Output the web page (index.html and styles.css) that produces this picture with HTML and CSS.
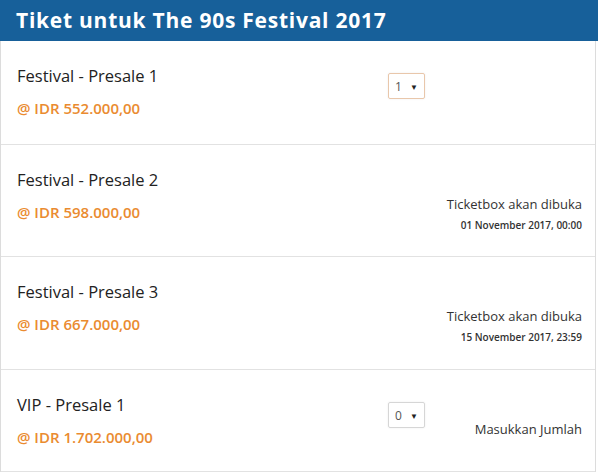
FILE: index.html
```html
<!DOCTYPE html>
<html>
<head>
<meta charset="utf-8">
<link rel="stylesheet" href="styles.css">
</head>
<body>
<div class="panel">
  <div class="header">Tiket untuk The 90s Festival 2017</div>
  <div class="row first">
    <div class="info">
      <div class="name">Festival - Presale 1</div>
      <div class="price">@ IDR 552.000,00</div>
    </div>
    <div class="qty"><div class="select focus"><span>1</span><span class="arrow">▼</span></div></div>
    <div class="side"></div>
  </div>
  <div class="row timed">
    <div class="info">
      <div class="name">Festival - Presale 2</div>
      <div class="price">@ IDR 598.000,00</div>
    </div>
    <div class="qty"></div>
    <div class="side status">
      <div class="open">Ticketbox akan dibuka</div>
      <div class="date">01 November 2017, 00:00</div>
    </div>
  </div>
  <div class="row timed third">
    <div class="info">
      <div class="name">Festival - Presale 3</div>
      <div class="price">@ IDR 667.000,00</div>
    </div>
    <div class="qty"></div>
    <div class="side status">
      <div class="open">Ticketbox akan dibuka</div>
      <div class="date">15 November 2017, 23:59</div>
    </div>
  </div>
  <div class="row last">
    <div class="info">
      <div class="name">VIP - Presale 1</div>
      <div class="price">@ IDR 1.702.000,00</div>
    </div>
    <div class="qty"><div class="select"><span>0</span><span class="arrow">▼</span></div></div>
    <div class="side hint">Masukkan Jumlah</div>
  </div>
</div>
</body>
</html>
```
FILE: styles.css
```css
html, body {
  margin: 0;
  padding: 0;
  background: #ffffff;
}
body {
  font-family: "Open Sans", "Noto Sans", sans-serif;
  color: #222222;
}
.panel {
  width: 594px;
  border-left: 1px solid #dcdcdc;
  border-right: 1px solid #dcdcdc;
}
.header {
  background: #17609a;
  color: #ffffff;
  font-weight: 700;
  font-size: 21px;
  height: 41px;
  line-height: 41px;
  padding-left: 16px;
  margin-right: -3px;
  margin-left: -1px;
  letter-spacing: 0.75px;
}
.row {
  display: grid;
  grid-template-columns: 1fr 37px 157px;
  padding: 24px 13px 24px 16px;
  border-bottom: 1px solid #e2e2e2;
}
.row.first {
  padding-bottom: 25px;
}
.row.timed {
  padding-bottom: 22px;
}
.row.third {
  padding-bottom: 23px;
}
.row.last {
  padding-bottom: 23px;
}
.name {
  font-size: 16.5px;
  line-height: 22px;
  letter-spacing: 0;
}
.price {
  margin-top: 10px;
  font-size: 15px;
  line-height: 22px;
  font-weight: 600;
  color: #ea8b30;
  letter-spacing: 0;
}
.qty {
  padding-top: 8px;
}
.select {
  box-sizing: border-box;
  width: 37px;
  height: 26px;
  border: 1px solid #d6d6d6;
  border-radius: 2px;
  display: flex;
  align-items: center;
  justify-content: center;
  gap: 8px;
  font-size: 12px;
  color: #555;
  box-shadow: 0 0 2px rgba(0,0,0,0.08);
}
.select.focus {
  border-color: #e9c7ab;
}
.arrow {
  font-size: 8px;
  color: #222;
}
.side {
  text-align: right;
}
.status {
  padding-top: 24px;
}
.open {
  font-size: 13px;
  line-height: 22px;
  color: #333;
  letter-spacing: 0;
}
.date {
  margin-top: 2px;
  font-size: 10px;
  line-height: 17px;
  font-weight: 600;
  color: #333;
  letter-spacing: 0;
}
.hint {
  padding-top: 24px;
  font-size: 13px;
  line-height: 22px;
  color: #333;
  letter-spacing: 0;
}
```
